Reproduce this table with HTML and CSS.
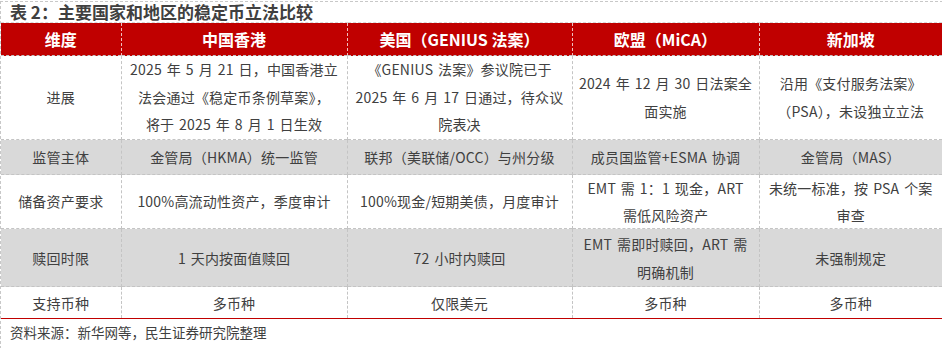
FILE: index.html
```html
<!DOCTYPE html>
<html lang="zh-CN">
<head>
<meta charset="utf-8">
<title>表 2：主要国家和地区的稳定币立法比较</title>
<link rel="stylesheet" href="styles.css">
</head>
<body>
<div class="page">
  <div class="title">表 2：主要国家和地区的稳定币立法比较</div>
  <table class="cmp">
    <colgroup>
      <col class="c1"><col class="c2"><col class="c3"><col class="c4"><col class="c5">
    </colgroup>
    <thead>
      <tr class="rh">
        <th>维度</th><th>中国香港</th><th>美国（GENIUS 法案）</th><th>欧盟（MiCA）</th><th>新加坡</th>
      </tr>
    </thead>
    <tbody>
      <tr class="r1">
        <td>进展</td>
        <td>2025 年 5 月 21 日，中国香港立<br>法会通过《稳定币条例草案》，<br>将于 2025 年 8 月 1 日生效</td>
        <td>《GENIUS 法案》参议院已于<br>2025 年 6 月 17 日通过，待众议<br>院表决</td>
        <td>2024 年 12 月 30 日法案全<br>面实施</td>
        <td>沿用《支付服务法案》<br>（PSA），未设独立立法</td>
      </tr>
      <tr class="r2 gray">
        <td>监管主体</td>
        <td>金管局（HKMA）统一监管</td>
        <td>联邦（美联储/OCC）与州分级</td>
        <td>成员国监管+ESMA 协调</td>
        <td>金管局（MAS）</td>
      </tr>
      <tr class="r3">
        <td>储备资产要求</td>
        <td>100%高流动性资产，季度审计</td>
        <td>100%现金/短期美债，月度审计</td>
        <td>EMT 需 1：1 现金，ART<br>需低风险资产</td>
        <td>未统一标准，按 PSA 个案<br>审查</td>
      </tr>
      <tr class="r4 gray">
        <td>赎回时限</td>
        <td>1 天内按面值赎回</td>
        <td>72 小时内赎回</td>
        <td>EMT 需即时赎回，ART 需<br>明确机制</td>
        <td>未强制规定</td>
      </tr>
      <tr class="r5">
        <td>支持币种</td>
        <td>多币种</td>
        <td>仅限美元</td>
        <td>多币种</td>
        <td>多币种</td>
      </tr>
    </tbody>
  </table>
  <div class="source">资料来源：新华网等，民生证券研究院整理</div>
</div>
</body>
</html>
```

FILE: styles.css
```css
html, body {
  margin: 0;
  padding: 0;
  background: #ffffff;
}

.page {
  width: 942px;
  height: 346px;
  margin-top: 1px;
  border-top: 1px dashed #c8c8c8;
  border-bottom: 1px dashed #c8c8c8;
  border-left: 1px dashed #c8c8c8;
  box-sizing: content-box;
  font-family: "Noto Sans CJK SC", "Microsoft YaHei", sans-serif;
  color: #404040;
}

.title {
  height: 20px;
  line-height: 20px;
  padding-left: 9px;
  font-size: 17px;
  font-weight: bold;
  color: #404040;
  white-space: nowrap;
}

.cmp {
  width: 941px;
  border-collapse: collapse;
  table-layout: fixed;
}

.c1 { width: 120px; }
.c2 { width: 226px; }
.c3 { width: 225px; }
.c4 { width: 187px; }
.c5 { width: 183px; }

.cmp th,
.cmp td {
  padding: 0;
  text-align: center;
  vertical-align: middle;
  white-space: nowrap;
}

.cmp th {
  background: #c00000;
  color: #ffffff;
  font-size: 16px;
  font-weight: bold;
  line-height: 22px;
  height: 32px;
  border-top: 1px dashed #d8d8d8;
  border-left: 1px dashed rgba(255, 255, 255, 0.75);
}

.cmp th:first-child,
.cmp td:first-child {
  border-left: none;
}

.cmp td {
  font-size: 14px;
  line-height: 28px;
  letter-spacing: 0.2px;
  word-spacing: 1.5px;
  border-left: 1px dashed #c4c4c4;
  border-top: 1px dashed #c4c4c4;
}

.r1 td { height: 83px; line-height: 27.5px; }
.r2 td { height: 34px; line-height: 22px; }
.r3 td { height: 53px; line-height: 26.5px; }
.r4 td { height: 57px; line-height: 28px; }
.r5 td { height: 31px; line-height: 22px; border-bottom: 1px solid #c00000; }

.gray td {
  background: #d9d9d9;
}

.source {
  height: 27px;
  line-height: 26px;
  padding-left: 9px;
  font-size: 13.5px;
  color: #404040;
  white-space: nowrap;
}
```
